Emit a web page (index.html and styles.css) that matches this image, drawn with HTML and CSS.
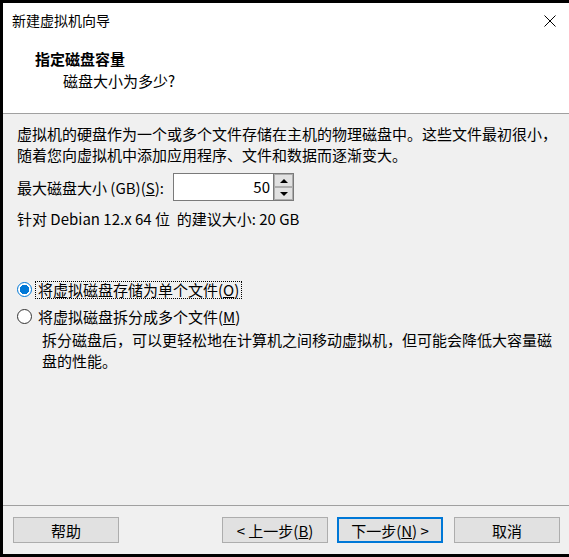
FILE: index.html
```html
<!DOCTYPE html>
<html lang="zh-CN">

<head>
    <meta charset="UTF-8">
    <title>新建虚拟机向导</title>
    <link rel="stylesheet" href="styles.css">
</head>

<body>
    <div id="wizard">
        <div class="titlebar">
            <span class="title">新建虚拟机向导</span>
            <svg class="close" width="12" height="12" viewBox="0 0 12 12">
                <path d="M0.5 0.5 L11.5 11.5 M11.5 0.5 L0.5 11.5" stroke="#000" stroke-width="1" fill="none" />
            </svg>
        </div>

        <div class="header">
            <div class="header-title">指定磁盘容量</div>
            <div class="header-sub">磁盘大小为多少?</div>
        </div>

        <div class="content">
            <p class="intro">虚拟机的硬盘作为一个或多个文件存储在主机的物理磁盘中。这些文件最初很小，<br>随着您向虚拟机中添加应用程序、文件和数据而逐渐变大。</p>

            <div class="size-row">
                <label class="size-label">最大磁盘大小 (GB)(<u>S</u>):</label>
                <div class="spin">
                    <div class="spin-value">50</div>
                    <div class="spin-btns">
                        <div class="spin-btn"><span class="tri-up"></span></div>
                        <div class="spin-btn"><span class="tri-down"></span></div>
                    </div>
                </div>
            </div>

            <p class="hint">针对 Debian 12.x 64 位&nbsp; 的建议大小: 20 GB</p>

            <div class="options">
                <div class="option">
                    <span class="radio checked"></span>
                    <span class="option-text focused">将虚拟磁盘存储为单个文件(<u>O</u>)</span>
                </div>
                <div class="option">
                    <span class="radio"></span>
                    <span class="option-text">将虚拟磁盘拆分成多个文件(<u>M</u>)</span>
                </div>
                <p class="option-desc">拆分磁盘后，可以更轻松地在计算机之间移动虚拟机，但可能会降低大容量磁<br>盘的性能。</p>
            </div>
        </div>

        <div class="footer">
            <button class="btn">帮助</button>
            <div class="nav-btns">
                <button class="btn">&lt; 上一步(<u>B</u>)</button>
                <button class="btn default">下一步(<u>N</u>) &gt;</button>
                <button class="btn cancel">取消</button>
            </div>
        </div>
    </div>
</body>

</html>
```

FILE: styles.css
```css
* {
    margin: 0;
    padding: 0;
    box-sizing: border-box;
}

body {
    background: #000;
    font-family: "Noto Sans CJK SC", "Noto Sans", sans-serif;
    font-size: 15px;
    line-height: 21px;
    color: #000;
}

#wizard {
    width: 566px;
    height: 551px;
    margin: 3px 0 3px 3px;
    background-color: #f0f0f0;
    display: flex;
    flex-direction: column;
}

/* --------  TITLE BAR ------------------- */
.titlebar {
    height: 35px;
    background-color: #fff;
    display: flex;
    align-items: center;
    justify-content: space-between;
    padding: 0 13px 0 9px;
}

.title {
    font-size: 14px;
}

/* --------  HEADER ------------------- */
.header {
    height: 76px;
    background-color: #fff;
    border-bottom: 1px solid #a0a0a0;
    padding: 10px 0 0 32px;
}

.header-title {
    font-weight: bold;
}

.header-sub {
    padding-left: 28px;
    margin-top: 1px;
}

/* --------  CONTENT ------------------- */
.content {
    flex: 1;
    padding: 9px 0 0 14px;
    white-space: nowrap;
}

.size-row {
    display: flex;
    align-items: center;
    margin-top: 8px;
}

.size-label {
    width: 156px;
}

.spin {
    display: flex;
    height: 28px;
}

.spin-value {
    width: 101px;
    background-color: #fff;
    border: 1px solid #7a7a7a;
    text-align: right;
    padding-right: 3px;
    line-height: 26px;
}

.spin-btns {
    width: 20px;
    display: flex;
    flex-direction: column;
    background-color: #fff;
    border: 1px solid #7a7a7a;
    border-left: none;
}

.spin-btn {
    flex: 1;
    background-color: #e1e1e1;
    border: 1px solid #adadad;
    display: flex;
    align-items: center;
    justify-content: center;
}

.tri-up {
    border-left: 4px solid transparent;
    border-right: 4px solid transparent;
    border-bottom: 4px solid #000;
}

.tri-down {
    border-left: 4px solid transparent;
    border-right: 4px solid transparent;
    border-top: 4px solid #000;
}

.hint {
    margin-top: 7px;
}

/* --------  RADIO OPTIONS ------------------- */
.options {
    margin-top: 47px;
}

.option {
    height: 27px;
    display: flex;
    align-items: center;
}

.radio {
    width: 15px;
    height: 15px;
    border-radius: 50%;
    border: 1px solid #333;
    background-color: #fff;
    margin-right: 3px;
}

.radio.checked {
    border-color: #0078d7;
    background: radial-gradient(circle, #0078d7 0 4.5px, #fff 5px);
}

.option-text {
    padding: 0 2px 0 2px;
    border: 1px dotted transparent;
    line-height: 16px;
}

.option-text.focused {
    border-color: #000;
}

.option-desc {
    padding-left: 25px;
    margin-top: -1px;
}

/* --------  FOOTER ------------------- */
.footer {
    height: 49px;
    border-top: 1px solid #a0a0a0;
    display: flex;
    justify-content: space-between;
    align-items: flex-start;
    padding: 11px 9px 0 10px;
}

.nav-btns {
    display: flex;
    gap: 9px;
}

.btn {
    width: 106px;
    height: 26px;
    background-color: #e1e1e1;
    border: 1px solid #adadad;
    font-family: inherit;
    font-size: 15px;
    color: #000;
}

.btn.default {
    border: 2px solid #0078d7;
}

.btn.cancel {
    margin-left: 2px;
}
```
